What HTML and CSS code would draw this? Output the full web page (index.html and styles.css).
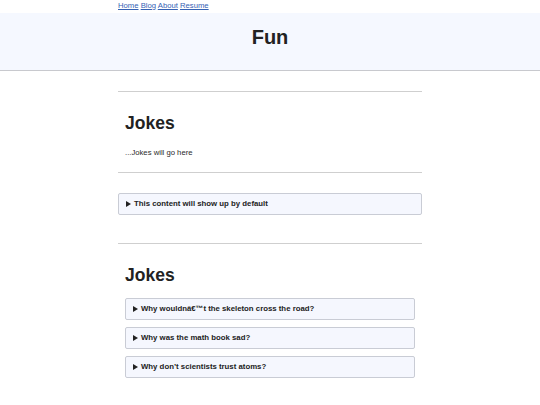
FILE: index.html
```html
<!DOCTYPE html>
<html lang="en">
<head>
  <meta charset="UTF-8">
  <meta name="viewport" content="width=device-width, initial-scale=1">
  <title>Fun</title>
  <link rel="stylesheet" href="styles.css">
</head>
<body>

<nav class="topnav">
  <a href="#">Home</a> <a href="#">Blog</a> <a href="#">About</a> <a href="#">Resume</a>
</nav>

<header class="banner">
  <h1>Fun</h1>
</header>

<main class="page">
  <hr class="rule">

  <section class="intro">
    <h2>Jokes</h2>
    <p>...Jokes will go here</p>
  </section>

  <hr class="rule tight">

  <details class="card wide">
    <summary>This content will show up by default</summary>
    <p>Hidden content</p>
  </details>

  <hr class="rule second">

  <section class="jokes">
    <h2>Jokes</h2>
    <div class="joke-list">
      <details class="card">
        <summary>Why wouldnâ€™t the skeleton cross the road?</summary>
        <p>He didn't have the guts.</p>
      </details>
      <details class="card">
        <summary>Why was the math book sad?</summary>
        <p>It had too many problems.</p>
      </details>
      <details class="card">
        <summary>Why don’t scientists trust atoms?</summary>
        <p>They make up everything.</p>
      </details>
    </div>
  </section>
</main>

</body>
</html>
```

FILE: styles.css
```css
* {
  box-sizing: border-box;
}

body {
  margin: 0;
  font-family: "Liberation Sans", Arial, sans-serif;
  color: #222;
  background: #fff;
}

.topnav {
  width: 304px;
  margin: 0 auto;
  height: 13px;
  font-size: 7.7px;
  line-height: 12px;
}

.topnav a {
  color: #3562b4;
}

.banner {
  background-color: #f5f8ff;
  border-bottom: 1px solid #c8c9ce;
  height: 58px;
  padding-top: 13px;
  text-align: center;
}

.banner h1 {
  margin: 0;
  font-size: 20px;
  line-height: 23px;
}

.page {
  width: 304px;
  margin: 0 auto;
}

.rule {
  border: none;
  border-top: 1px solid #cfcfcf;
  height: 0;
  margin: 20px 0 0;
}

.rule.tight {
  margin-top: 15px;
}

.rule.second {
  margin-top: 28px;
}

.intro,
.jokes {
  padding: 0 7px;
}

.intro h2,
.jokes h2 {
  margin: 21px 0 0;
  font-size: 17.5px;
  line-height: 20px;
}

.intro p {
  margin: 16px 0 0;
  font-size: 7.7px;
  line-height: 8px;
  color: #2a2a2a;
}

.card {
  background-color: #f5f7fe;
  border: 1px solid #c9ccd5;
  border-radius: 2px;
  font-size: 7.8px;
}

.card.wide {
  margin-top: 20px;
}

.card summary {
  list-style: none;
  font-weight: bold;
  height: 20px;
  line-height: 20px;
  padding: 0 7px;
  cursor: pointer;
}

.card summary::-webkit-details-marker {
  display: none;
}

.card summary::before {
  content: "";
  display: inline-block;
  width: 0;
  height: 0;
  border-left: 5px solid #222;
  border-top: 3px solid transparent;
  border-bottom: 3px solid transparent;
  margin-right: 3px;
  vertical-align: -0.5px;
}

.card p {
  margin: 0;
  padding: 0 7px 6px;
}

.joke-list {
  display: flex;
  flex-direction: column;
  gap: 7px;
  margin-top: 13px;
}
```
